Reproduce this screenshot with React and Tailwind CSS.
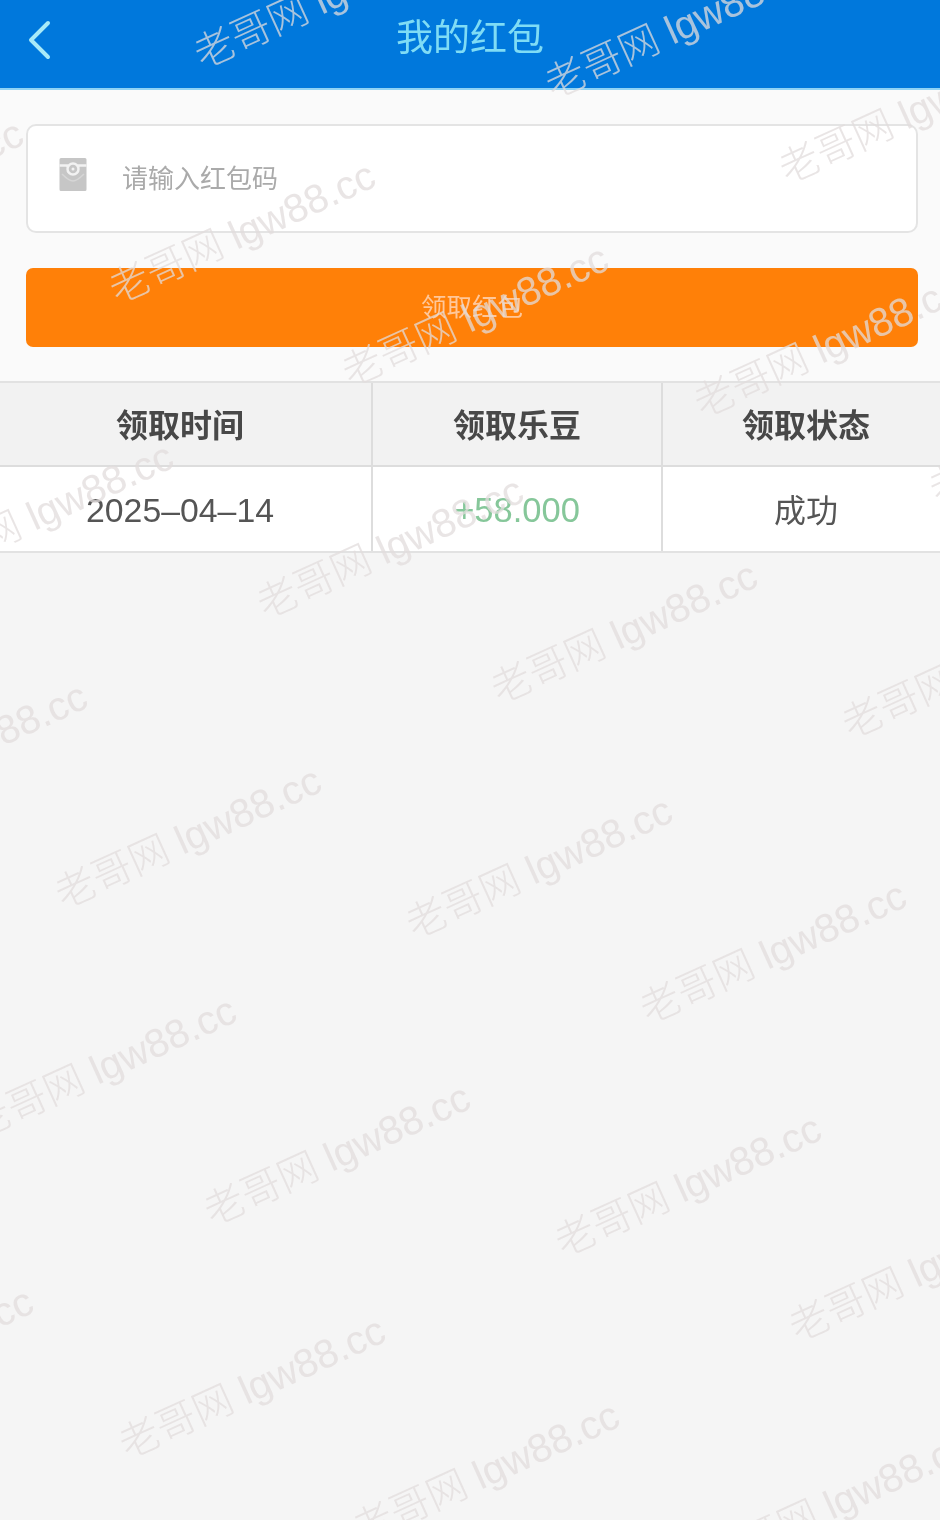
const FONT = "font-['Liberation_Sans','Noto_Sans_CJK_SC',sans-serif]";

// watermark tiles, each one centred on its own point
const marks = [
  "left-[327px] top-[-3px]",
  "left-[678px] top-[27px]",
  "left-[-110px] top-[190px]",
  "left-[912px] top-[112px]",
  "left-[242px] top-[232px]",
  "left-[475px] top-[315px]",
  "left-[827px] top-[346px]",
  "left-[1062px] top-[432px]",
  "left-[40px] top-[513px]",
  "left-[390px] top-[547px]",
  "left-[624px] top-[632px]",
  "left-[975px] top-[667px]",
  "left-[-46px] top-[753px]",
  "left-[188px] top-[837px]",
  "left-[539px] top-[867px]",
  "left-[773px] top-[952px]",
  "left-[103px] top-[1067px]",
  "left-[337px] top-[1154px]",
  "left-[688px] top-[1185px]",
  "left-[922px] top-[1270px]",
  "left-[-100px] top-[1358px]",
  "left-[252px] top-[1387px]",
  "left-[486px] top-[1472px]",
  "left-[837px] top-[1502px]",
];

const headCell = "flex h-[84px] items-center justify-center border-b-2 border-[#dddddd] bg-[#f2f2f2] pt-[3px] text-[32px] font-bold text-[#484848]";
const bodyCell = "flex h-[84px] items-center justify-center border-[#dddddd] pt-[3px]";

const EnvelopeIcon = () => (
  <svg width="30" height="35" viewBox="0 0 30 35" className="shrink-0">
    <path d="M3 1h24a1.5 1.5 0 0 1 1.5 1.5v30a1.5 1.5 0 0 1-1.5 1.5H3a1.5 1.5 0 0 1-1.5-1.5v-30A1.5 1.5 0 0 1 3 1z" fill="#c6c6c6" />
    <path d="M1.5 8.5 9 8.5a6.5 6.5 0 0 0 12 0h7.5" fill="none" stroke="#f2f2f2" strokeWidth="2.5" />
    <path d="M4 17c5 5 8 7 11 7s6-2 11-7" fill="none" stroke="#d6d6d6" strokeWidth="1.5" />
    <circle cx="15" cy="12" r="5.5" fill="#c6c6c6" stroke="#f2f2f2" strokeWidth="2.5" />
    <circle cx="15" cy="12" r="1.5" fill="#f2f2f2" />
  </svg>
);

const App = () => {
  return (
    <div className={`relative h-[1520px] overflow-hidden bg-[#f5f5f5] blur-[0.6px] ${FONT}`}>
      <header className="relative flex h-[90px] items-center justify-center border-b-2 border-[#8fd3f5] bg-[#0078dc] pb-[12px]">
        <svg width="26" height="40" viewBox="0 0 26 40" className="absolute left-[27px] top-[20px]">
          <path d="M21 3 4 20l17 17" fill="none" stroke="#a8eaf8" strokeWidth="4" strokeLinecap="round" strokeLinejoin="round" />
        </svg>
        <h1 className="text-[37px] leading-none font-normal text-[#7fdcf5]">我的红包</h1>
      </header>

      <section className="bg-[#fafafa] px-[26px] pt-[34px] pb-[34px]">
        <div className="flex h-[109px] w-[892px] items-center rounded-[10px] border-2 border-[#e4e4e4] bg-white pb-[8px] pl-[30px]">
          <EnvelopeIcon />
          <span className="mt-[8px] ml-[34px] text-[26px] leading-none text-[#aaaaaa]">请输入红包码</span>
        </div>
        <button className="mt-[35px] flex h-[79px] w-[892px] items-center justify-center rounded-[7px] bg-[#ff8008] text-[25.5px] leading-none text-[#ffc79a]">
          领取红包
        </button>
      </section>

      <div className="grid grid-cols-[373px_290px_277px] border-y-2 border-[#e2e2e2] bg-white text-center">
        <div className={`${headCell} border-r-2 pr-[11px]`}>领取时间</div>
        <div className={`${headCell} border-r-2`}>领取乐豆</div>
        <div className={`${headCell} pl-[9px]`}>领取状态</div>
        <div className={`${bodyCell} border-r-2 pr-[11px] text-[33.8px] text-[#555555]`}>2025–04–14</div>
        <div className={`${bodyCell} border-r-2 text-[34.5px] text-[#86c79a]`}>+58.000</div>
        <div className={`${bodyCell} pl-[9px] text-[32px] text-[#555555]`}>成功</div>
      </div>

      <div className="pointer-events-none absolute inset-0 overflow-hidden">
        {marks.map((pos) => (
          <span
            key={pos}
            className={`absolute ${pos} -translate-x-1/2 -translate-y-1/2 -rotate-[24.5deg] whitespace-nowrap text-[40px] leading-none font-light text-[#e2dcdc]/75`}
          >
            老哥网 lgw88.cc
          </span>
        ))}
      </div>
    </div>
  );
};

export default App;
